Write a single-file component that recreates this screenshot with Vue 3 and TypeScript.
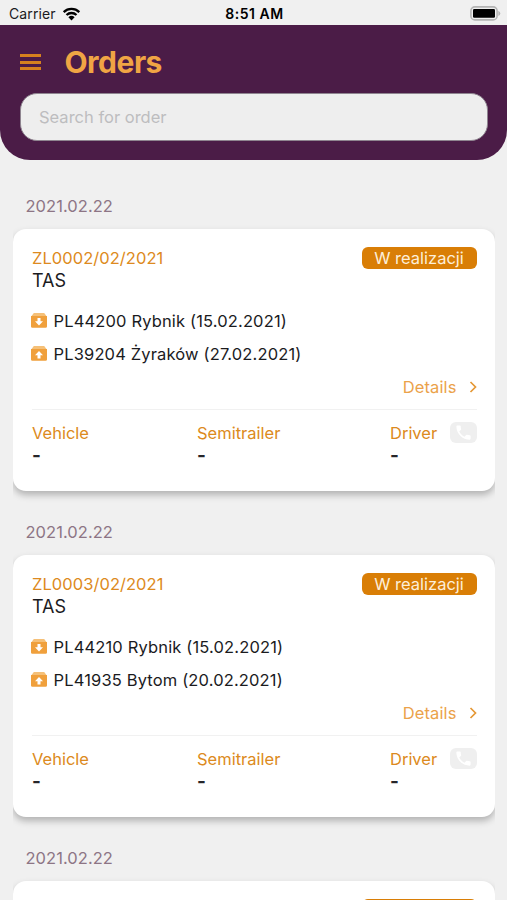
<script setup lang="ts">
interface Stop {
  kind: 'load' | 'unload'
  label: string
}

interface Order {
  date: string
  number?: string
  client?: string
  status?: string
  stops: Stop[]
}

const orders: Order[] = [
  {
    date: '2021.02.22',
    number: 'ZL0002/02/2021',
    client: 'TAS',
    status: 'W realizacji',
    stops: [
      { kind: 'load', label: 'PL44200 Rybnik (15.02.2021)' },
      { kind: 'unload', label: 'PL39204 Żyraków (27.02.2021)' },
    ],
  },
  {
    date: '2021.02.22',
    number: 'ZL0003/02/2021',
    client: 'TAS',
    status: 'W realizacji',
    stops: [
      { kind: 'load', label: 'PL44210 Rybnik (15.02.2021)' },
      { kind: 'unload', label: 'PL41935 Bytom (20.02.2021)' },
    ],
  },
  {
    date: '2021.02.22',
    stops: [],
  },
]
</script>

<template>
  <div class="screen">
    <div class="status-bar">
      <div class="carrier">
        <span>Carrier</span>
        <svg class="wifi" viewBox="0 0 18 14">
          <path d="M1.2 5.1a11.2 11.2 0 0 1 15.6 0" />
          <path d="M4 8a7.2 7.2 0 0 1 10 0" />
          <path class="dot" d="M9 13.4 5.9 10.3a4.5 4.5 0 0 1 6.2 0z" />
        </svg>
      </div>
      <span class="clock">8:51 AM</span>
      <svg class="battery" viewBox="0 0 31 15">
        <rect x="0.9" y="0.9" width="26.2" height="13" rx="4" fill="#efefef" stroke="#b4b4b4" stroke-width="1.6" />
        <rect x="3" y="3" width="22" height="8.8" rx="1.2" fill="#000" />
        <path d="M28.3 4.8q2 1 2 2.6t-2 2.6z" fill="#b4b4b4" />
      </svg>
    </div>

    <header class="header">
      <div class="title-row">
        <div class="burger"><i></i><i></i><i></i></div>
        <h1>Orders</h1>
      </div>
      <div class="search"><input type="text" placeholder="Search for order" /></div>
    </header>

    <main class="list">
      <section v-for="(order, i) in orders" :key="i" class="group">
        <div class="date">{{ order.date }}</div>
        <article class="card">
          <div class="head">
            <div>
              <div class="number">{{ order.number }}</div>
              <div class="client">{{ order.client }}</div>
            </div>
            <span class="tag">{{ order.status }}</span>
          </div>
          <template v-if="order.number">
            <div class="stops">
              <div v-for="stop in order.stops" :key="stop.label" class="stop">
                <svg class="box" viewBox="0 0 16 15">
                  <path d="M2.8 0h10.4L15.6 3.2H.4z" fill="#f5c078" />
                  <path d="M0 3h16v10.400q0 1.400-1.400 1.400H1.400Q0 14.800 0 13.400z" fill="#f0a03c" />
                  <path v-if="stop.kind === 'load'" d="M6.500 5h3v3.200h2.500L8 12.600 4 8.200h2.500z" fill="#fff" />
                  <path v-else d="M6.500 12.500h3V9.300h2.500L8 5 4 9.300h2.500z" fill="#fff" />
                </svg>
                <span>{{ stop.label }}</span>
              </div>
            </div>
            <div class="details">
              <span>Details</span>
              <svg viewBox="0 0 8 12"><path d="M1.500 1 6.500 6l-5 5" /></svg>
            </div>
            <div class="assets">
              <div class="asset"><span>Vehicle</span><b>-</b></div>
              <div class="asset"><span>Semitrailer</span><b>-</b></div>
              <div class="asset"><span>Driver</span><b>-</b></div>
              <div class="call">
                <svg viewBox="0 0 24 24">
                  <path d="M6.600 10.800c1.440 2.830 3.760 5.140 6.590 6.590l2.200-2.200c.27-.27.67-.36 1.020-.24 1.120.37 2.330.57 3.570.57.55 0 1 .45 1 1V20c0 .55-.45 1-1 1C10.600 21 3 13.400 3 4c0-.55.45-1 1-1h3.500c.55 0 1 .45 1 1 0 1.250.2 2.450.57 3.570.11.35.03.74-.25 1.020z" />
                </svg>
              </div>
            </div>
          </template>
        </article>
      </section>
    </main>
  </div>
</template>

<style>
body {
  background: #f0f0f0;
  overflow: hidden;
}
</style>

<style scoped>
.screen {
  width: 507px;
  height: 900px;
  overflow: hidden;
  background: #f0f0f0;
  font-family: Inter, "Liberation Sans", sans-serif;
  font-size: 16.5px;
  color: #1b1b1e;
}
.screen * {
  box-sizing: border-box;
}
.status-bar {
  display: grid;
  grid-template-columns: 1fr auto 1fr;
  align-items: center;
  height: 25px;
  padding: 2px 6px 0 9px;
  font-size: 14px;
  line-height: 22px;
}
.carrier {
  display: flex;
  align-items: center;
  gap: 6px;
  letter-spacing: 0.1px;
}
.wifi {
  width: 19px;
  height: 14px;
  fill: none;
  stroke: #000;
  stroke-width: 2.3;
}
.wifi .dot {
  fill: #000;
  stroke: none;
}
.clock {
  margin-left: -1px;
  font-weight: 600;
  letter-spacing: 0.5px;
  color: #000;
}
.battery {
  width: 31px;
  height: 15px;
  justify-self: end;
}
.header {
  height: 134.5px;
  padding: 16px 19px 0 19.5px;
  background: #4b1c47;
  border-radius: 0 0 30px 30px;
}
.title-row {
  display: flex;
  align-items: center;
  gap: 24px;
  height: 42px;
}
.burger {
  display: grid;
  gap: 3.5px;
  width: 21px;
}
.burger i {
  height: 3px;
  background: #d6811e;
}
h1 {
  margin: 0;
  font-size: 30px;
  line-height: 42px;
  font-weight: 700;
  letter-spacing: -0.5px;
  color: #f0a544;
}
.search {
  height: 48px;
  margin-top: 10px;
  padding: 0 19px 0 18.5px;
  background: #eee;
  border: 1px solid #8f8590;
  border-radius: 17px;
}
.search input {
  width: 100%;
  height: 46px;
  padding: 0;
  border: 0;
  outline: 0;
  background: transparent;
  font: inherit;
}
.search input::placeholder {
  color: #bdbdbf;
}
.list {
  height: 740.5px;
  margin: 0 12px 0 13px;
  padding-top: 33.5px;
  overflow: hidden;
}
.group {
  margin-bottom: 28px;
}
.date {
  height: 36px;
  padding: 4px 0 0 12.5px;
  line-height: 19px;
  letter-spacing: 0.05px;
  color: #8d7585;
}
.card {
  height: 262px;
  padding: 18px 18.5px 0 19px;
  background: #fff;
  border-radius: 13px;
  box-shadow: 0 4px 7px rgba(0, 0, 0, 0.26);
}
.head {
  display: flex;
  justify-content: space-between;
  height: 57px;
}
.number {
  height: 22px;
  line-height: 22px;
  letter-spacing: 0.05px;
  color: #dd8a20;
}
.client {
  font-size: 18px;
  line-height: 24px;
}
.tag {
  width: 115px;
  height: 21.5px;
  border-radius: 6px;
  background: #d97e06;
  color: #fdeed9;
  text-align: center;
  line-height: 22px;
}
.stops {
  height: 66px;
  margin-left: -1px;
}
.stop {
  display: flex;
  align-items: center;
  gap: 6.5px;
  height: 33px;
  letter-spacing: 0.15px;
}
.box {
  width: 16px;
  height: 15px;
}
.details {
  display: flex;
  justify-content: flex-end;
  align-items: center;
  gap: 12px;
  height: 33px;
  color: #eba24a;
}
.details span {
  letter-spacing: 0.1px;
}
.details svg {
  width: 8px;
  height: 12px;
  fill: none;
  stroke: #e59835;
  stroke-width: 1.7;
}
.assets {
  display: grid;
  grid-template-columns: 165px 193px 60px 27px;
  margin-top: 6px;
  padding-top: 12px;
  border-top: 1px solid #f1f1f1;
}
.asset {
  display: grid;
  grid-template-rows: 23px 23px;
  line-height: 23px;
  color: #dc8a20;
}
.asset b {
  margin-top: -1px;
  font-weight: 700;
  font-size: 19px;
  color: #26262a;
}
.call {
  display: grid;
  place-items: center;
  width: 27px;
  height: 21px;
  border-radius: 6px;
  background: #efefef;
}
.call svg {
  width: 19px;
  height: 19px;
  fill: #fff;
}
</style>
